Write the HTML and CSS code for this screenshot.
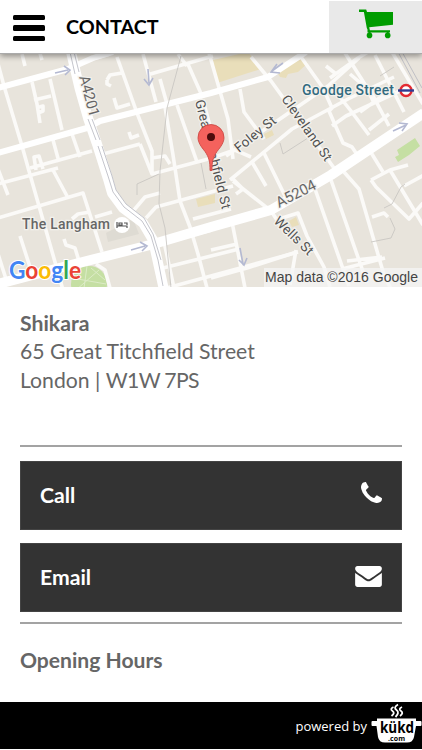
FILE: index.html
```html
<!DOCTYPE html>
<html lang="en">
<head>
    <meta charset="UTF-8">
    <meta name="viewport" content="width=device-width, initial-scale=1.0">
    <title>Contact</title>
    <link rel="stylesheet" href="styles.css">
</head>
<body>
    <header class="top-bar">
        <button class="menu-button" aria-label="Menu">
            <span></span>
            <span></span>
            <span></span>
        </button>
        <h1>CONTACT</h1>
        <a href="#" class="cart" aria-label="Cart">
            <svg width="36" height="30" viewBox="0 0 36 30">
                <path d="M0 .5h7.2l.8 2.6h26v12.7L10.200 18.300l.7 2.900H31v2.300H8.500v-3l-.7-1.500L4.900 2.900H0z"/>
                <circle cx="10.500" cy="26.400" r="2.800"/>
                <circle cx="28.700" cy="26.400" r="2.800"/>
                <path d="M9.500 22h2v3h-2zM27.700 22h2v3h-2z"/>
            </svg>
        </a>
    </header>

    <div class="map">
        <svg width="422" height="233" viewBox="0 54 422 233">
            <!-- parks and shaded buildings -->
            <path class="sand" d="M213 60l35-8 13 17-44 14zM277 72l24-13 7 4-10 9-10 2-2 4-6-1zM196 199l19-5v9l-17 4zM264 134l8-4 2 5-8 4zM289 221l7-4 3 8-7 2z"/>
            <path class="plaza" d="M106 233l27-14 6 15-31 8z"/>
            <path class="green" d="M397 150l18-12 5 8-11 9-11 7-3-5 4-2z"/>
            <circle class="green" cx="89" cy="284" r="18"/>
            <path class="paths" d="M72 278l34 6M87 266l-3 22M76 290l23-20M91 268l14 12"/>

            <!-- side streets -->
            <g class="street">
                <path d="M-3 60L4 86 22 146 29 171 63 290"/>
                <path d="M32 82L37 104 40 123M36 108l7-2v5l-5 2M34 100l17-4M50 79l12 51M22 54l3 12M39 50l3 10"/>
                <path d="M82 62l28-8M117 57l20 56 15 38v23M107 80l3-5 12-2M107 80v4l4 2M114 98l3 10 13-4"/>
                <path d="M143 54l13 48M160 79l7 25M187 62l16 36M147 75l66-19M178 54l9 12M177 105l20 57M203 100l8 30"/>
                <path d="M103 154l37-10M129 132l2 6 8-3M140 144l12 30 60-16 28-10M152 158l13-2 5 8"/>
                <path d="M53 140l6 22M72 134l8 23M30 168l62-17M36 170l-2-13 5-1 4 13"/>
                <path d="M-2 218l85-25 19 59M-2 184l60-16M53 170l14 26M-2 169l10 26M-2 254l8 25M20 236l10 31M64 239l2 6 9 3 4 13M72 219l6-5 12-2M95 217l17-5"/>
                <path d="M134 210l11-13 15-4M146 218l10-11 77-21M165 107l8 48 7 46 10 26 8 27 9 34M193 219l38-10"/>
                <path d="M163 268l76-19M163 289l81-22 54-15M184 237l28-7M96 264l9 6 5 18M163 237l11 51"/>
                <path d="M209 53l19 66 5 40M240 89l4 23 20 27M251 57l20 24 63 87M226 156l102-70 31-28"/>
                <path d="M230 180l62-51 56-30 46-22M251 157l-16-7M301 57l22 31 9 20-3 3 14 32 9 4 8 12"/>
                <path d="M330 78l28-20 20-12M345 53l21 33 8 17M375 55l29 57M331 86l20 25 18 24M350 74l21 18 18 34M360 112l25-18M369 130l20-16M392 52l31 52M367 146l16 26M332 126l14-10 58-27M326 66l10 8"/>
                <path d="M233 179l10 10-7 5M233 181l38 30 14 21M252 162l14 24M264 153l23 47M279 219l19-6 9 23 17 31 6 20"/>
                <path d="M232 222l13 66M211 250l26-6M211 278l36-10 50-16M296 250l-6 35M315 189l34 97M331 180l36 103M344 172l15 17 25 86 7 14"/>
                <path d="M371 180l19-10 18-5M371 180l5 7 33 32 14-16M390 170l33 55M404 186l20-11M372 217l12-4 4 4M347 261l35-4M342 269l43-11"/>
            </g>

            <!-- wider streets -->
            <g class="street medium">
                <path d="M-2 88L68 69l25-11 20-6M-2 153l89-25 13-7 111-28 57-16 38-25"/>
            </g>
            <g class="street major">
                <path d="M-2 284l69-18 83-21 61-18 60-17 60-35 93-62"/>
                <path d="M71 52l9 38 8 28 9 26 11 35 4 14 11 15 20 15 10 17 11 50"/>
            </g>
            <path class="divider" d="M70 52l5 22M74 52l5 20M92 119l8 21M88 119l8 21M98 146l10 30 5 16 11 15 18 14 9 15 7 24 5 26M102 146l10 30 4 14 10 14 18 14 9 16 8 26M397 50l23 43M401 50l21 38"/>
            <path class="tube-line" d="M181 56l-14 52-7 63-1 33 6 24 6 60M380 76l14-9M137 195v-11l22-10M201 163l5 26M384 208l8-4 9-17 4-3M371 242l20-4 4-9-5-11M280 143l3 11 28-18"/>

            <!-- one way arrows -->
            <g class="arrow">
                <path d="M55 73l13-3M64 66l6 4-5 5M148 69l1 14M144 79l5 6 4-7M283 63l-11 8M277 64l-6 8 9 1M393 131l13-6M399 123l8 1-5 7M131 250l14-4M140 242l7 4-5 5M240 248l3 16M239 260l5 5 3-7"/>
            </g>

            <circle class="spot" cx="122" cy="225" r="8"/>
            <path class="bed" d="M117 222v6M117 226h10v2M119 223h3v2h-3zM124 223h3v2"/>

            <!-- labels -->
            <g class="label">
                <text transform="translate(79 77) rotate(75)" textLength="42" class="big">A4201</text>
                <text transform="translate(195 101) rotate(76)" textLength="112">Great Titchfield St</text>
                <text transform="translate(239 153) rotate(-39)" textLength="49">Foley St</text>
                <text transform="translate(281 99) rotate(55)" textLength="77">Cleveland St</text>
                <text transform="translate(279 208) rotate(-27)" textLength="43" class="big">A5204</text>
                <text transform="translate(273 222) rotate(44)" textLength="49">Wells St</text>
                <text x="22" y="228.500" textLength="88" class="place">The Langham</text>
                <text x="302" y="95" textLength="92" class="station">Goodge Street</text>
            </g>
            <circle class="roundel" cx="406" cy="90.500" r="5.500"/>
            <path class="roundel-bar" d="M398 90.500h16"/>

            <!-- marker -->
            <path class="pin" d="M210 170.500c0-9-1-13-5-19-4-5-7-9-7-14a13 13 0 0 1 26 0c0 5-3 9-7 14-4 6-5 10-5 19z"/>
            <circle class="pin-dot" cx="211" cy="137" r="4"/>

            <text class="google" x="9" y="279" textLength="72" lengthAdjust="spacingAndGlyphs"><tspan class="blue">G</tspan><tspan class="red">o</tspan><tspan class="yellow">o</tspan><tspan class="blue">g</tspan><tspan class="lime">l</tspan><tspan class="red">e</tspan></text>
            <rect class="credit-bg" x="264" y="268" width="158" height="19"/>
            <text class="credit" x="265" y="281.500" textLength="153">Map data ©2016 Google</text>
        </svg>
    </div>

    <main class="content">
        <address>
            <strong>Shikara</strong><br>
            65 Great Titchfield Street<br>
            London | <span class="postcode">W1W 7PS</span>
        </address>
        <hr>
        <a href="#" class="action">
            <span>Call</span>
            <svg class="phone" width="21" height="21" viewBox="0 0 1408 1408">
                <path d="M1408 1112q0 27-10 70.500t-21 68.500q-21 50-122 106-94 51-186 51-27 0-53-3.500t-57.500-12.500-47-14.500-55.500-20.500-49-18q-98-35-175-83-127-79-264-216t-216-264q-48-77-83-175-3-9-18-49t-20.500-55.500-14.500-47-12.500-57.500-3.500-53q0-92 51-186 56-101 106-122 25-11 68.500-21t70.500-10q14 0 21 3 18 6 53 76 11 19 30 54t35 63.500 31 53.500q3 4 17.500 25t21.500 35.500 7 28.500q0 20-28.500 50t-62 55-62 53-28.500 46q0 9 5 22.500t8.500 20.500 14 24 11.500 19q76 137 174 235t235 174q2 1 19 11.500t24 14 20.500 8.500 22.500 5q18 0 46-28.500t53-62 55-62 50-28.500q14 0 28.500 7t35.500 21.500 25 17.500q25 15 53.500 31t63.500 35 54 30q70 35 76 53 3 7 3 21z"/>
            </svg>
        </a>
        <a href="#" class="action">
            <span>Email</span>
            <svg class="envelope" width="27" height="21" viewBox="0 0 1792 1408">
                <path d="M1792 454v794q0 66-47 113t-113 47H160q-66 0-113-47T0 1248V454q44 49 101 87 362 246 497 345 57 42 92.500 65.500t94.500 48 110 24.500h2q51 0 110-24.500t94.500-48T1194 886q170-123 498-345 57-39 100-87zm0-294q0 79-49 151t-122 123q-376 261-468 325-10 7-42.500 30.500t-54 38-52 32.500-57.500 27-50 9h-2q-23 0-50-9t-57.500-27-52-32.500-54-38T639 759Q548 695 377 576.500T172 434Q110 392 55 318.500T0 182Q0 104 41.500 52T160 0h1472q65 0 112.500 47T1792 160z"/>
            </svg>
        </a>
        <hr class="last">
        <h2>Opening Hours</h2>
    </main>

    <footer class="footer">
        <span>powered by</span>
        <svg width="51" height="47" viewBox="0 0 51 47">
            <path class="steam" d="M22.500 5q-4 2-1 4t-1 5M27 2.500q-5 3-1.500 5.500t-1 7M31 5q-4 2-1 4t-1 5"/>
            <path class="pot" d="M6 16.500h39v2.500h4.500q1 0 1 1v3q0 1-1 1H45l-2 11q-1 5.500-7 5.500H14q-6 0-7-5.500L5.500 24H1.500q-1 0-1-1v-3q0-1 1-1H6z"/>
            <text class="kukd" x="9" y="31" textLength="34" lengthAdjust="spacingAndGlyphs">kükd</text>
            <text class="com" x="17" y="38.500" textLength="17">.com</text>
        </svg>
    </footer>
</body>
</html>
```

FILE: styles.css
```css
* {
    box-sizing: border-box;
}

body {
    margin: 0;
    height: 750px;
    overflow: hidden;
    display: flex;
    flex-direction: column;
    background: #fff;
    color: #666;
    font-family: Lato, sans-serif;
}

.top-bar {
    position: relative;
    z-index: 1;
    flex: none;
    height: 54px;
    display: flex;
    align-items: center;
    background: #fff;
    border-bottom: 1px solid #aaa;
    box-shadow: 0 2px 6px rgba(0, 0, 0, 0.4);
}

.menu-button {
    width: 32px;
    margin: 3px 0 0 13px;
    padding: 0;
    border: none;
    background: none;
    display: flex;
    flex-direction: column;
    gap: 5px;
}

.menu-button span {
    height: 5.5px;
    border-radius: 1.5px;
    background: #000;
}

h1 {
    margin: 0 0 1px 21px;
    color: #000;
    font-size: 19.8px;
    line-height: 24px;
    font-weight: bold;
}

.cart {
    width: 93px;
    height: 52px;
    margin-left: auto;
    padding: 8px 0 0 30px;
    align-self: flex-end;
    background: #e9e9e9;
}

.cart svg {
    display: block;
    fill: #009c00;
}

.map {
    flex: none;
    height: 233px;
}

.map svg {
    display: block;
    background: #e8e4dc;
    font-family: Roboto, sans-serif;
}

.map path {
    fill: none;
}

.map .sand {
    fill: #e9deba;
}

.map .plaza {
    fill: #dedbd3;
}

.map .green {
    fill: #c5dfa3;
}

.paths {
    stroke: #dcebc6;
}

.street {
    stroke: #fbfaf8;
    stroke-width: 3.6;
    stroke-linejoin: round;
}

.medium {
    stroke: #fff;
    stroke-width: 6;
}

.major {
    stroke: #fff;
    stroke-width: 10;
}

.divider {
    stroke: #b5b6bf;
    stroke-width: 0.8;
}

.tube-line {
    stroke: #c5c3bf;
    stroke-width: 0.8;
}

.arrow {
    stroke: #b4b9d2;
    stroke-width: 1.6;
}

.spot {
    fill: #fff;
}

.bed {
    stroke: #555;
    stroke-width: 1.2;
}

.label {
    fill: #505050;
    stroke: #f3f1ec;
    stroke-width: 2.5px;
    paint-order: stroke;
    font-size: 13.5px;
}

.label .big {
    font-size: 15px;
    fill: #666;
}

.label .place {
    font-size: 14px;
    fill: #666;
    font-weight: 500;
}

.label .station {
    font-size: 14px;
    fill: #326b80;
    font-weight: 500;
}

.roundel {
    fill: #fff;
    stroke: #e32b32;
    stroke-width: 2.4;
}

.roundel-bar {
    stroke: #303c91;
    stroke-width: 2.4;
}

.map .pin {
    fill: #f4625d;
    stroke: #c8423e;
    stroke-width: 0.8;
}

.pin-dot {
    fill: #4c0c0c;
}

.google {
    font-family: Lato, sans-serif;
    font-size: 24px;
    font-weight: bold;
    stroke: #fff;
    stroke-width: 2px;
    paint-order: stroke;
}

.blue {
    fill: #4285f4;
}

.red {
    fill: #ea4335;
}

.yellow {
    fill: #fbbc05;
}

.lime {
    fill: #34a853;
}

.credit-bg {
    fill: #f5f5f5;
    fill-opacity: 0.75;
}

.credit {
    fill: #444;
    font-family: "Liberation Sans", sans-serif;
    font-size: 14px;
}

.content {
    flex: 1;
    padding: 21.5px 20px 0;
}

address {
    height: 136.5px;
    font-style: normal;
    font-size: 21.2px;
    line-height: 28.8px;
}

.postcode {
    letter-spacing: -0.7px;
}

hr {
    height: 2px;
    margin: 0 0 14px;
    border: none;
    background: #a3a3a3;
}

.action {
    height: 69px;
    margin-bottom: 13px;
    padding: 0 19px;
    display: flex;
    align-items: center;
    justify-content: space-between;
    background: #333;
    border: 1px solid #444;
    color: #fff;
    font-size: 21.2px;
    font-weight: bold;
    text-decoration: none;
}

.action span {
    margin-bottom: 2px;
}

.action svg {
    fill: #fff;
}

.phone {
    margin-bottom: 6px;
}

.envelope {
    margin-bottom: 3px;
}

.last {
    margin: -3px 0 21px;
}

h2 {
    margin: 0;
    font-size: 21.1px;
    line-height: 30px;
}

.footer {
    flex: none;
    height: 47px;
    margin-bottom: 1px;
    display: flex;
    align-items: center;
    justify-content: flex-end;
    gap: 4px;
    background: #000;
    color: #fff;
    font-family: "Open Sans", sans-serif;
    font-size: 13px;
}

.footer span {
    padding-top: 1px;
}

.steam {
    fill: none;
    stroke: #fff;
    stroke-width: 1.8;
}

.pot {
    fill: #fff;
}

.kukd {
    font-size: 16px;
    font-weight: bold;
}

.com {
    font-size: 7px;
    font-weight: bold;
}
```
